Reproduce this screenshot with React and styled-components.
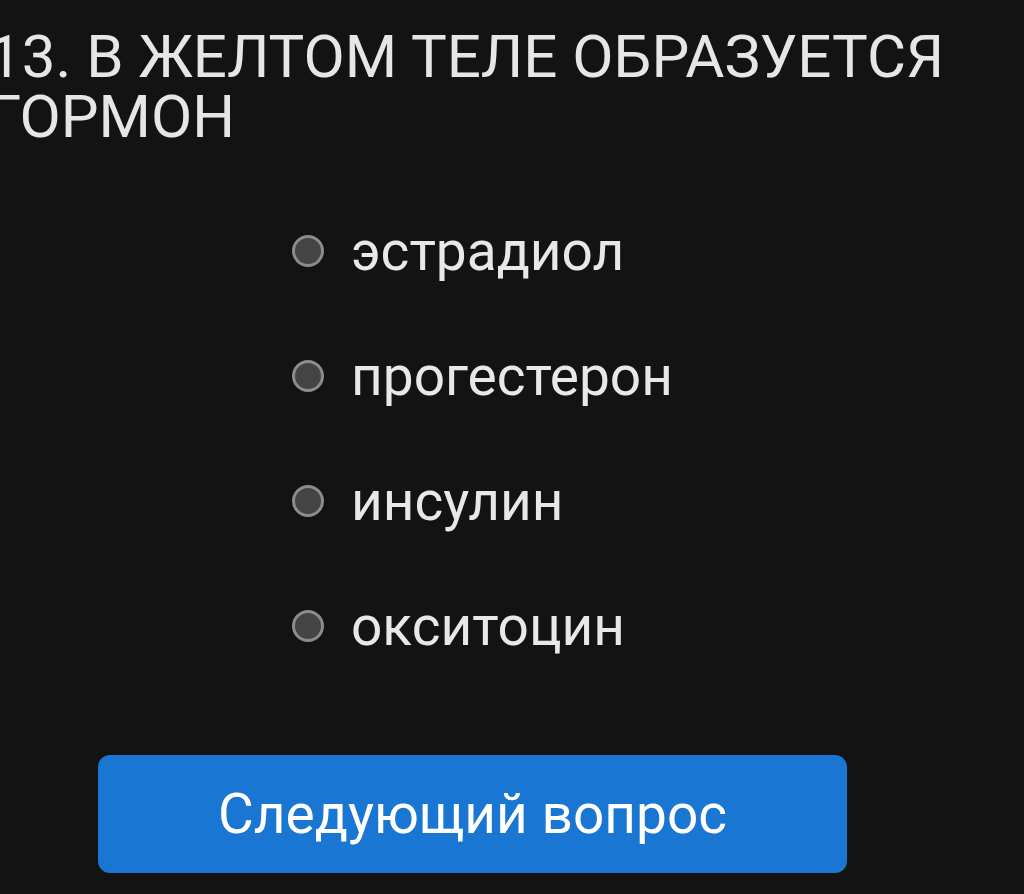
import React, { useState } from 'react'
import styled, { createGlobalStyle } from 'styled-components'

const GlobalStyle = createGlobalStyle`
  html, body {
    margin: 0;
    padding: 0;
    background: #131313;
  }
  body {
    font-family: Roboto, 'Noto Sans', sans-serif;
    color: #e8e8e8;
  }
`

const answers = ['эстрадиол', 'прогестерон', 'инсулин', 'окситоцин']

const App = () => {
  const [picked, setPicked] = useState(null)
  return (
    <Screen>
      <GlobalStyle />
      <Question>13. В ЖЕЛТОМ ТЕЛЕ ОБРАЗУЕТСЯ ГОРМОН</Question>
      <Options>
        {answers.map((a, i) => (
          <Option key={a} onClick={() => setPicked(i)}>
            <Radio checked={picked === i} />
            <span>{a}</span>
          </Option>
        ))}
      </Options>
      <NextButton type="button">Следующий вопрос</NextButton>
    </Screen>
  )
}

export default App

const Screen = styled.div`
  width: 1024px;
  height: 894px;
  overflow: hidden;
  display: flex;
  flex-direction: column;
`

const Question = styled.h1`
  margin: 27px 0 0 -12px;
  width: 980px;
  font-size: 60px;
  font-weight: 400;
  line-height: 60px;
  color: #e6e6e6;
`

const Options = styled.div`
  display: flex;
  flex-direction: column;
  margin-top: 41px;
  padding-left: 292px;
`

const Option = styled.label`
  display: flex;
  align-items: center;
  gap: 27px;
  height: 125px;
  font-size: 55px;
  color: #e8e8e8;
  cursor: pointer;
`

const Radio = styled.span`
  box-sizing: border-box;
  width: 32px;
  height: 32px;
  border-radius: 50%;
  border: 3px solid #8c8c8c;
  background: ${p => (p.checked ? '#1976d2' : '#444444')};
  flex-shrink: 0;
`

const NextButton = styled.button`
  margin: 67px 0 0 98px;
  width: 749px;
  height: 118px;
  border: none;
  border-radius: 12px;
  background: #1976d2;
  color: #ffffff;
  font-family: Roboto, 'Noto Sans', sans-serif;
  font-size: 55px;
  cursor: pointer;
`
